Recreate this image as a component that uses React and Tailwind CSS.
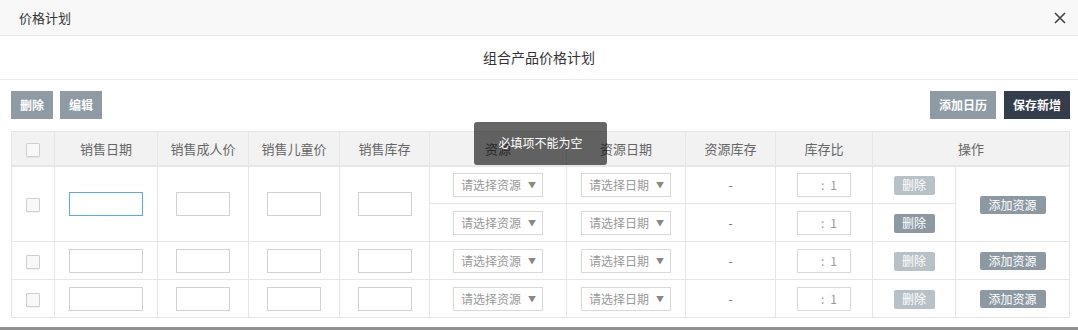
import React from 'react'

const font = { fontFamily: '"Noto Sans CJK SC", "Liberation Sans", sans-serif' }

const Checkbox = () => (
  <span className="inline-block w-[14px] h-[14px] border border-[#cfcfcf] bg-[#f8f8f8] rounded-[1px] shadow-[0_1px_1px_rgba(0,0,0,0.06)] align-middle" />
)

const TextInput = ({ w, active }) => (
  <input
    className={`h-[24px] ${w} border ${active ? 'border-[#5aa9e6]' : 'border-[#d2d2d2]'} bg-white outline-none align-middle`}
  />
)

const FakeSelect = ({ text, w }) => (
  <div className={`inline-flex items-center justify-between h-[24px] ${w} border border-[#d9d9d9] bg-white pl-[7px] pr-[6px] text-[12px] text-[#999] align-middle`}>
    <span>{text}</span>
    <span className="text-[8px] text-[#888]">▼</span>
  </div>
)

const Ratio = () => (
  <div className="inline-flex items-center justify-end h-[24px] w-[54px] border border-[#d9d9d9] bg-white pr-[13px] text-[12px] text-[#999] align-middle">
    <span className="mr-[6px]">:</span>
    <span>1</span>
  </div>
)

const SmallBtn = ({ children, light, w }) => (
  <button
    className={`inline-flex items-center justify-center ${w} text-[12px] text-white rounded-[2px] align-middle ${light ? 'bg-[#b8c1c7]' : 'bg-[#8c99a3]'}`}
  >
    {children}
  </button>
)

const td = 'border border-[#e6e6e6] text-center align-middle p-0'

const App = () => {
  return (
    <div className="w-[1078px] h-[330px] bg-[#8f8f8f] overflow-hidden" style={font}>
      <div className="relative h-[327px] bg-white">
        <div className="flex items-center justify-between h-[36px] bg-[#f8f8f8] border-b border-[#e8e8e8] pl-[19px] pr-[12px]">
          <span className="text-[13px] text-[#333]">价格计划</span>
          <svg width="12" height="12" viewBox="0 0 12 12" className="text-[#444]">
            <path d="M1 1 L11 11 M11 1 L1 11" stroke="currentColor" strokeWidth="1.6" />
          </svg>
        </div>
        <div className="flex items-center justify-center h-[44px] border-b border-[#efefef] text-[14px] text-[#333]">
          组合产品价格计划
        </div>
        <div className="flex items-center justify-between pt-[11px] pl-[11px] pr-[8px]">
          <div className="flex gap-[7px]">
            <button className="h-[28px] px-[9px] bg-[#8e9ba4] text-white text-[12px] font-bold">删除</button>
            <button className="h-[28px] px-[9px] bg-[#8e9ba4] text-white text-[12px] font-bold">编辑</button>
          </div>
          <div className="flex gap-[8px]">
            <button className="h-[28px] px-[9px] bg-[#8e9ba4] text-white text-[12px] font-bold">添加日历</button>
            <button className="h-[28px] px-[9px] bg-[#343d4c] text-white text-[12px] font-bold">保存新增</button>
          </div>
        </div>
        <div className="pl-[11px] pt-[12px]">
          <table className="border-collapse table-fixed w-[1058px]">
            <colgroup>
              <col className="w-[43px]" />
              <col className="w-[103px]" />
              <col className="w-[91px]" />
              <col className="w-[91px]" />
              <col className="w-[90px]" />
              <col className="w-[137px]" />
              <col className="w-[119px]" />
              <col className="w-[90px]" />
              <col className="w-[97px]" />
              <col className="w-[83px]" />
              <col className="w-[114px]" />
            </colgroup>
            <thead>
              <tr className="h-[34px] bg-[#f2f2f2] text-[13px] text-[#666] font-normal border-b-2 border-[#e6e6e6]">
                <th className={td}><Checkbox /></th>
                <th className={`${td} font-normal`}>销售日期</th>
                <th className={`${td} font-normal`}>销售成人价</th>
                <th className={`${td} font-normal`}>销售儿童价</th>
                <th className={`${td} font-normal`}>销售库存</th>
                <th className={`${td} font-normal`}>资源</th>
                <th className={`${td} font-normal`}>资源日期</th>
                <th className={`${td} font-normal`}>资源库存</th>
                <th className={`${td} font-normal`}>库存比</th>
                <th className={`${td} font-normal`} colSpan={2}>操作</th>
              </tr>
            </thead>
            <tbody className="text-[12px] text-[#666]">
              <tr className="h-[38px]">
                <td className={td} rowSpan={2}><Checkbox /></td>
                <td className={td} rowSpan={2}><TextInput w="w-[74px]" active /></td>
                <td className={td} rowSpan={2}><TextInput w="w-[54px]" /></td>
                <td className={td} rowSpan={2}><TextInput w="w-[54px]" /></td>
                <td className={td} rowSpan={2}><TextInput w="w-[54px]" /></td>
                <td className={td}><FakeSelect text="请选择资源" w="w-[90px]" /></td>
                <td className={td}><FakeSelect text="请选择日期" w="w-[90px]" /></td>
                <td className={td}>-</td>
                <td className={td}><Ratio /></td>
                <td className={td}><SmallBtn light w="w-[41px] h-[19px]">删除</SmallBtn></td>
                <td className={td} rowSpan={2}><SmallBtn w="w-[66px] h-[18px]">添加资源</SmallBtn></td>
              </tr>
              <tr className="h-[38px]">
                <td className={td}><FakeSelect text="请选择资源" w="w-[90px]" /></td>
                <td className={td}><FakeSelect text="请选择日期" w="w-[90px]" /></td>
                <td className={td}>-</td>
                <td className={td}><Ratio /></td>
                <td className={td}><SmallBtn w="w-[41px] h-[19px]">删除</SmallBtn></td>
              </tr>
              {[0, 1].map((i) => (
                <tr key={i} className="h-[38px]">
                  <td className={td}><Checkbox /></td>
                  <td className={td}><TextInput w="w-[74px]" /></td>
                  <td className={td}><TextInput w="w-[54px]" /></td>
                  <td className={td}><TextInput w="w-[54px]" /></td>
                  <td className={td}><TextInput w="w-[54px]" /></td>
                  <td className={td}><FakeSelect text="请选择资源" w="w-[90px]" /></td>
                  <td className={td}><FakeSelect text="请选择日期" w="w-[90px]" /></td>
                  <td className={td}>-</td>
                  <td className={td}><Ratio /></td>
                  <td className={td}><SmallBtn light w="w-[41px] h-[19px]">删除</SmallBtn></td>
                  <td className={td}><SmallBtn w="w-[66px] h-[18px]">添加资源</SmallBtn></td>
                </tr>
              ))}
            </tbody>
          </table>
        </div>
        <div className="absolute left-[474px] top-[122px] w-[133px] h-[43px] rounded-[3px] bg-black/60 flex items-start justify-center pt-[12px] text-[12px] text-white">
          必填项不能为空
        </div>
      </div>
    </div>
  )
}

export default App
